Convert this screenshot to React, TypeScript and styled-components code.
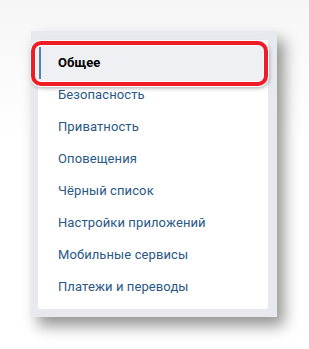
import React from 'react';
import styled, { createGlobalStyle } from 'styled-components';

const items = [
    'Общее',
    'Безопасность',
    'Приватность',
    'Оповещения',
    'Чёрный список',
    'Настройки приложений',
    'Мобильные сервисы',
    'Платежи и переводы',
];

const App = () => {
    return (
        <>
            <GlobalStyle />
            <Stage>
                <Frame>
                    <Menu>
                        {items.map((title, i) => (
                            <Item key={title} $active={i === 0}>
                                {i === 0 && <Highlight />}
                                <Label $active={i === 0}>{title}</Label>
                            </Item>
                        ))}
                    </Menu>
                </Frame>
            </Stage>
        </>
    );
};

export default App;

const GlobalStyle = createGlobalStyle`
    body {
        margin: 0;
        background: #fff;
        font-family: Roboto, "Open Sans", sans-serif;
    }
`;

const Stage = styled.div`
    width: 309px;
    height: 349px;
    padding: 31px 0 0 31px;
    box-sizing: border-box;
    background: linear-gradient(180deg, #f6f6f7 0%, #ffffff 40%);
`;

const Frame = styled.div`
    width: 246px;
    height: 286px;
    box-sizing: border-box;
    padding: 9px 9px 8px 7px;
    background: #e8e9ee;
    box-shadow: 7px 9px 14px rgba(0, 0, 0, 0.42);
`;

const Menu = styled.div`
    background: #fff;
    border-radius: 0 0 3px 3px;
    padding: 6px 0 7px;
    height: 100%;
    box-sizing: border-box;
`;

const Item = styled.div<{ $active?: boolean }>`
    position: relative;
    height: 32px;
    display: flex;
    align-items: center;
    padding-left: 20px;

    &::before {
        content: '';
        display: ${(p) => (p.$active ? 'block' : 'none')};
        position: absolute;
        left: 1px;
        top: 1px;
        bottom: -1px;
        width: 2px;
        background: #5181b8;
        z-index: 1;
    }
`;

const Label = styled.span<{ $active?: boolean }>`
    position: relative;
    z-index: 1;
    font-size: 13px;
    letter-spacing: 0.1px;
    font-weight: ${(p) => (p.$active ? 700 : 400)};
    color: ${(p) => (p.$active ? '#000' : '#2a5885')};
`;

const Highlight = styled.div`
    position: absolute;
    top: -5px;
    bottom: -8px;
    left: -7px;
    right: 0;
    background: #eef0f3;
    border: 4px solid #ee1c25;
    border-radius: 10px;
    box-shadow: inset 0 0 0 1px #fff, 0 0 0 1px #fff, 1px 2px 4px rgba(0, 0, 0, 0.35);
    z-index: 0;
`;
